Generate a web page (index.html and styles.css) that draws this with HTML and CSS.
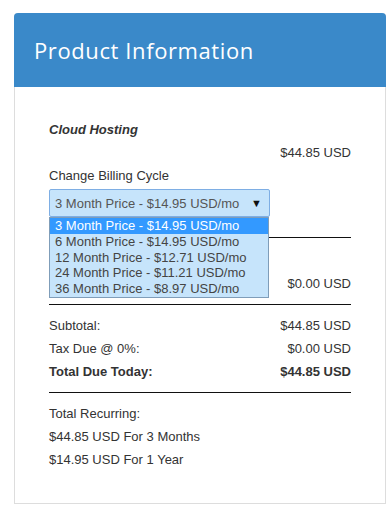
FILE: index.html
```html
<!DOCTYPE html>
<html lang="en">
<head>
  <meta charset="UTF-8">
  <meta name="viewport" content="width=device-width, initial-scale=1.0">
  <title>Order Summary</title>
  <link rel="stylesheet" href="styles.css">
</head>
<body>
  <div class="panel">
    <div class="panel-heading">
      <h3>Product Information</h3>
    </div>

    <div class="panel-body">
      <p class="product-name">Cloud Hosting</p>
      <div class="summary-row">
        <span></span>
        <span>$44.85 USD</span>
      </div>

      <!-- Billing cycle dropdown (shown open) -->
      <div class="billing-cycle">
        <label>Change Billing Cycle</label>
        <div class="select-wrap">
          <div class="select">
            <span>3 Month Price - $14.95 USD/mo</span>
            <span class="caret">&#9660;</span>
          </div>
          <ul class="select-options">
            <li class="selected">3 Month Price - $14.95 USD/mo</li>
            <li>6 Month Price - $14.95 USD/mo</li>
            <li>12 Month Price - $12.71 USD/mo</li>
            <li>24 Month Price - $11.21 USD/mo</li>
            <li>36 Month Price - $8.97 USD/mo</li>
          </ul>
        </div>
      </div>

      <hr class="first">
      <!-- rows below sit under the open dropdown -->
      <div class="summary-row spacer"></div>
      <div class="summary-row">
        <span></span>
        <span>$0.00 USD</span>
      </div>
      <hr>

      <div class="summary-row">
        <span>Subtotal:</span>
        <span>$44.85 USD</span>
      </div>
      <div class="summary-row">
        <span>Tax Due @ 0%:</span>
        <span>$0.00 USD</span>
      </div>
      <div class="summary-row total">
        <span>Total Due Today:</span>
        <span>$44.85 USD</span>
      </div>
      <hr>

      <p>Total Recurring:</p>
      <p>$44.85 USD For 3 Months</p>
      <p>$14.95 USD For 1 Year</p>
    </div>
  </div>
</body>
</html>
```

FILE: styles.css
```css
/* Base reset */
* {
  margin: 0;
  padding: 0;
  box-sizing: border-box;
}
:root {
  --primary: #3a89c9;
  --border: #dddddd;
  --text: #333;
  --select-bg: #c6e4fb;
  --select-border: #7eaee4;
  --list-border: #7f9db9;
  --highlight: #3399ff;
}
body {
  font-family: "Liberation Sans", Arial, sans-serif;
  font-size: 13px;
  line-height: 23px;
  color: var(--text);
  background: #fff;
}

/* Panel */
.panel {
  width: 372px;
  margin: 13px 0 0 14px;
  border: 1px solid var(--border);
  border-top: none;
  border-radius: 4px 4px 0 0;
}
.panel-heading {
  background: var(--primary);
  color: #fff;
  height: 74px;
  margin: 0 -1px;
  padding: 0 20px 1px;
  border-radius: 4px 4px 0 0;
  display: flex;
  align-items: center;
}
.panel-heading h3 {
  font-family: "Open Sans", "DejaVu Sans", sans-serif;
  font-weight: normal;
  font-size: 22px;
  letter-spacing: 0.6px;
  line-height: 1;
}
.panel-body {
  padding: 31px 34px 32px 34px;
}

/* Product line */
.product-name {
  font-weight: bold;
  font-style: italic;
}
.summary-row {
  display: flex;
  justify-content: space-between;
}
.summary-row.spacer {
  height: 23px;
}
.summary-row.total {
  font-weight: bold;
}

/* Billing cycle select */
.select-wrap {
  position: relative;
  width: 221px;
  margin-top: 2px;
}
.select {
  height: 28px;
  border: 1px solid var(--select-border);
  border-radius: 2px;
  background: var(--select-bg);
  color: #555;
  padding: 0 7px 0 5px;
  display: flex;
  justify-content: space-between;
  align-items: center;
}
.caret {
  font-size: 11px;
  color: #111;
}
.select-options {
  position: absolute;
  top: 28px;
  left: 0;
  width: 220px;
  list-style: none;
  background: var(--select-bg);
  border: 1px solid var(--list-border);
  z-index: 2;
}
.select-options li {
  line-height: 15.8px;
  padding: 0 5px;
  color: #444;
  white-space: nowrap;
}
.select-options li.selected {
  background: var(--highlight);
  color: #fff;
}

/* Dividers */
hr {
  border: none;
  border-top: 1px solid #111;
  margin: 9px 0;
}
hr.first {
  margin: 20px 0 11px;
}
```
